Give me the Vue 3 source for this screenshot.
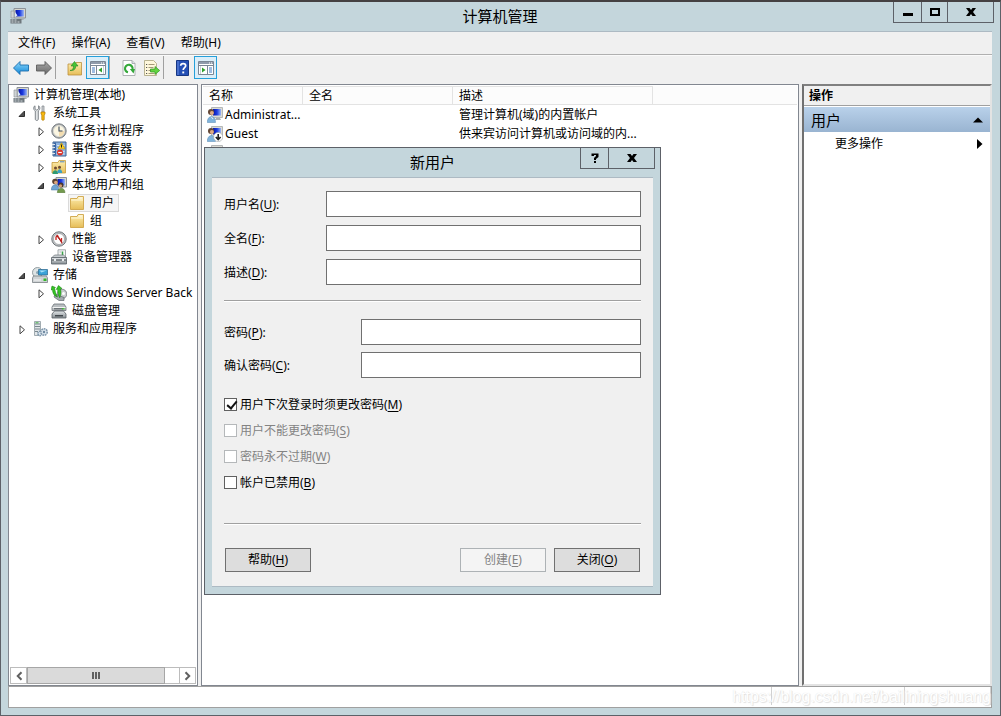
<script setup>
import { ref } from 'vue'

const menus = [
  { text: '文件', key: 'F' },
  { text: '操作', key: 'A' },
  { text: '查看', key: 'V' },
  { text: '帮助', key: 'H' },
]

const tools = [
  [
    { icon: 'back', label: '后退' },
    { icon: 'forward', label: '前进' },
  ],
  [
    { icon: 'up', label: '向上' },
    { icon: 'pane-left', label: '显示/隐藏控制台树', active: true },
  ],
  [
    { icon: 'refresh', label: '刷新' },
    { icon: 'export', label: '导出列表' },
  ],
  [
    { icon: 'help', label: '帮助' },
    { icon: 'pane-right', label: '显示/隐藏操作窗格', active: true },
  ],
]

const tree = [
  { text: '计算机管理(本地)', icon: 'computer', level: 0 },
  { text: '系统工具', icon: 'tools', level: 1, state: 'open' },
  { text: '任务计划程序', icon: 'clock', level: 2, state: 'closed' },
  { text: '事件查看器', icon: 'event', level: 2, state: 'closed' },
  { text: '共享文件夹', icon: 'share', level: 2, state: 'closed' },
  { text: '本地用户和组', icon: 'users', level: 2, state: 'open' },
  { text: '用户', icon: 'folder', level: 3, selected: true },
  { text: '组', icon: 'folder', level: 3 },
  { text: '性能', icon: 'perf', level: 2, state: 'closed' },
  { text: '设备管理器', icon: 'device', level: 2 },
  { text: '存储', icon: 'storage', level: 1, state: 'open' },
  { text: 'Windows Server Back', icon: 'backup', level: 2, state: 'closed' },
  { text: '磁盘管理', icon: 'disk', level: 2 },
  { text: '服务和应用程序', icon: 'services', level: 1, state: 'closed' },
]

const accounts = [
  { name: 'Administrat...', icon: 'user', desc: '管理计算机(域)的内置帐户' },
  { name: 'Guest', icon: 'user-off', desc: '供来宾访问计算机或访问域的内...' },
  { name: '', icon: 'user', desc: '' },
]

const identity = ref([
  { id: 'username', text: '用户名', key: 'U', type: 'text', value: '' },
  { id: 'fullname', text: '全名', key: 'F', type: 'text', value: '' },
  { id: 'description', text: '描述', key: 'D', type: 'text', value: '' },
])

const secrets = ref([
  { id: 'password', text: '密码', key: 'P', type: 'password', value: '' },
  { id: 'confirm', text: '确认密码', key: 'C', type: 'password', value: '' },
])

const options = ref([
  { id: 'must-change', text: '用户下次登录时须更改密码', key: 'M', on: true, disabled: false },
  { id: 'cannot-change', text: '用户不能更改密码', key: 'S', on: false, disabled: true },
  { id: 'never-expires', text: '密码永不过期', key: 'W', on: false, disabled: true },
  { id: 'account-off', text: '帐户已禁用', key: 'B', on: false, disabled: false },
])
</script>

<template>
  <div class="window">
    <svg class="defs" aria-hidden="true">
      <defs>
        <linearGradient id="g-blue" x1="0" y1="0" x2="0" y2="1">
          <stop offset="0" stop-color="#8fd8fb" /><stop offset="1" stop-color="#0d86d8" />
        </linearGradient>
        <linearGradient id="g-grey" x1="0" y1="0" x2="0" y2="1">
          <stop offset="0" stop-color="#a8a8a8" /><stop offset="1" stop-color="#686868" />
        </linearGradient>
        <linearGradient id="g-folder" x1="0" y1="0" x2="0" y2="1">
          <stop offset="0" stop-color="#fdeeb0" /><stop offset="1" stop-color="#e6bd58" />
        </linearGradient>
        <linearGradient id="g-screen" x1="0" y1="0" x2="1" y2="0">
          <stop offset="0" stop-color="#0714a8" /><stop offset="0.5" stop-color="#1c3be0" /><stop offset="1" stop-color="#9db8f5" />
        </linearGradient>
        <linearGradient id="g-metal" x1="0" y1="0" x2="0" y2="1">
          <stop offset="0" stop-color="#e4e8ea" /><stop offset="1" stop-color="#858c91" />
        </linearGradient>
      </defs>
      <symbol id="i-computer" viewBox="0 0 16 16">
        <path d="M4 0.500h11.500v9.500H4z" fill="#d6d6cc" stroke="#8d9298" />
        <path d="M5.500 2h8.500v6.500H5.500z" fill="url(#g-screen)" />
        <path d="M9 10.500h4l1 1.500H8z" fill="#aab0b4" />
        <path d="M1 3h3v7H1z" fill="#cfd3d5" stroke="#8c9296" stroke-width=".6" />
        <path d="M5 4l2.500 3.500L5 9z" fill="#dce9f5" />
        <path d="M.5 11h11v4.500H.5z" fill="#6e777c" />
        <path d="M1.500 12h5M1.500 14h9" stroke="#d3dadd" stroke-dasharray="2 1" />
      </symbol>
      <symbol id="i-tools" viewBox="0 0 16 16">
        <path d="M3 .8v3l1.800 1.400L6.600 3.800v-3c1.500.8 1.900 3.700-.3 5.200V14c0 2-3 2-3 0V6C1 4.500 1.400 1.600 3 .8z" fill="#e1e4e6" stroke="#757c81" stroke-width=".9" />
        <path d="M10 1h2v6h-2z" fill="#d1d5d8" stroke="#7b8287" stroke-width=".7" />
        <path d="M9 7h4v2l-.8 1v4.500c0 1-2.400 1-2.400 0V10L9 9z" fill="#f7b910" stroke="#b27a00" stroke-width=".7" />
      </symbol>
      <symbol id="i-clock" viewBox="0 0 16 16">
        <circle cx="8" cy="8" r="7.200" fill="#a5a9ac" stroke="#7e8386" />
        <circle cx="8" cy="8" r="5.600" fill="#fbf6e2" stroke="#d9d9d3" />
        <path d="M8 8h5.500A5.500 5.500 0 0 1 8 13.500z" fill="#f3ddb0" />
        <path d="M8 3.500V8h3.500" fill="none" stroke="#3d4b5c" stroke-width="1.100" />
      </symbol>
      <symbol id="i-event" viewBox="0 0 16 16">
        <path d="M2 1h13v14H2z" fill="#8fb4de" stroke="#3f6496" />
        <path d="M3 1.500h2v13H3z" fill="#3d66a3" />
        <path d="M6 4.500h7.500M6 7.500h7.500M6 10.500h7.500M6 13h7.500" stroke="#d6e4f4" />
        <path d="M1 3.500h3M1 6.500h3M1 9.500h3M1 12.500h3" stroke="#dfe6ec" />
        <path d="M10.500 1.800l3.500 6H7z" fill="#ffd21f" stroke="#b58a00" stroke-width=".6" />
        <path d="M10.500 3.500v3" stroke="#222" />
        <circle cx="9" cy="11.500" r="3" fill="#d9332b" />
        <path d="M7.200 11.500h3.600" stroke="#fff" stroke-width="1.200" />
      </symbol>
      <symbol id="i-share" viewBox="0 0 16 16">
        <path d="M1 3.500h6l1-2h6.500v12.500H1z" fill="url(#g-folder)" stroke="#c49a3b" stroke-width=".8" />
        <path d="M9 2.800h4.500" stroke="#4f86c2" />
        <circle cx="4.500" cy="9" r="1.500" fill="#6d4a32" /><circle cx="8.500" cy="8.300" r="1.500" fill="#6d4a32" />
        <path d="M1.500 15c0-5 5.500-5 5.500 0z" fill="#2f9a72" /><path d="M6.200 14c0-5 5-5 5 0z" fill="#3aa1c4" />
      </symbol>
      <symbol id="i-users" viewBox="0 0 16 16">
        <path d="M5 .5h10.500v9.500H5z" fill="#d9d9d0" stroke="#8d9298" />
        <path d="M6.500 2H14v6.500H6.500z" fill="url(#g-screen)" />
        <circle cx="4" cy="4.500" r="2.800" fill="#5b4231" /><circle cx="4.800" cy="5.500" r="1.800" fill="#dca67e" />
        <path d="M.3 13c0-7 7.400-7 7.400 0z" fill="#6fa4d3" stroke="#47779f" stroke-width=".5" />
        <circle cx="10" cy="8" r="2.500" fill="#49372b" /><circle cx="9.500" cy="8.800" r="1.600" fill="#d29c74" />
        <path d="M6.300 15.700c0-6 7.700-6 7.700 0z" fill="#739a4d" stroke="#4e7132" stroke-width=".5" />
      </symbol>
      <symbol id="i-folder" viewBox="0 0 16 16">
        <path d="M1.500 3.500h6.500l1-2h5.500v13h-13z" fill="url(#g-folder)" stroke="#cfa548" stroke-width=".9" />
        <path d="M9.500 3h4" stroke="#fff" /><path d="M2.200 5h11.800" stroke="#fff8d8" />
      </symbol>
      <symbol id="i-perf" viewBox="0 0 16 16">
        <circle cx="8" cy="8" r="7.200" fill="#c2c5c7" stroke="#6e7478" />
        <circle cx="8" cy="8" r="5.500" fill="#fff" stroke="#92979a" stroke-width=".7" />
        <path d="M5 9V6l1.500-1.500 4 6.500V7" fill="none" stroke="#cb2420" stroke-width="1.300" />
        <path d="M5.500 4.500l5.500 7" stroke="#a01a18" />
      </symbol>
      <symbol id="i-device" viewBox="0 0 16 16">
        <path d="M7 .8h7.500V8H7z" fill="#f4f5f5" stroke="#8e9498" stroke-width=".8" />
        <path d="M11.500 2.500v3.500" stroke="#38a546" stroke-width="1.500" /><path d="M8.500 3h2" stroke="#b3b9bc" />
        <path d="M1 8.500L3.500 6h9l3 2.500z" fill="#c7cdd0" stroke="#70777b" stroke-width=".7" />
        <path d="M.5 8.500h15V15H.5z" fill="url(#g-metal)" stroke="#596167" stroke-width=".8" />
        <path d="M.8 11h14.400" stroke="#434b51" /><path d="M3 10h2v2H3zM11 10h2v2h-2z" fill="#e9edef" />
      </symbol>
      <symbol id="i-storage" viewBox="0 0 16 16">
        <circle cx="5.500" cy="5.500" r="5" fill="#dde3e4" stroke="#7c888d" stroke-width=".8" /><circle cx="5.500" cy="5.500" r="1.500" fill="#8aa7b5" />
        <path d="M6.500 2.500h9V8h-9z" fill="#3ba3d8" stroke="#27648c" stroke-width=".7" /><path d="M7.500 3.500h7l-5 2z" fill="#a7e0f7" />
        <path d="M1.500 9h13l1 2v4.500H.5V11z" fill="#cfd3d5" stroke="#6a7277" stroke-width=".7" />
        <path d="M11.500 11.500h3v2.500h-3z" fill="#34b62a" /><path d="M2 13h7" stroke="#f5f6f6" />
      </symbol>
      <symbol id="i-backup" viewBox="0 0 16 16">
        <circle cx="11" cy="9" r="4.800" fill="#c9ccce" stroke="#737a7e" stroke-width=".8" /><circle cx="12.500" cy="8.500" r="1.500" fill="#fff" />
        <path d="M4 9l9 3.500v3H8L3 12z" fill="#a3aaae" stroke="#61696e" stroke-width=".7" />
        <path d="M1.500 4.500L0 5l1-4 3.500 1.500-1 .5c1 3.500 1 6 3 9C3 11 1.500 8 1.500 4.500z" fill="#35c624" stroke="#12780d" stroke-width=".5" />
        <path d="M6.500 4L5.200 4.500 7.500.5 11 3.500l-1.500.3c.8 3 .5 6-.8 9-1.700-3-1.700-6-2.200-8.800z" fill="#35c624" stroke="#12780d" stroke-width=".5" />
      </symbol>
      <symbol id="i-disk" viewBox="0 0 16 16">
        <path d="M3 1h10l2 3v3.500H1V4z" fill="#b9bec1" stroke="#6d7478" stroke-width=".8" />
        <path d="M1.500 4.500h13" stroke="#f2f3f3" /><path d="M3 5.800h9" stroke="#4c5358" />
        <path d="M3.500 8h9l2.500 3v4H1v-4z" fill="url(#g-metal)" stroke="#565d62" stroke-width=".8" />
        <path d="M4 12h8v1.500H4z" fill="#42494d" /><path d="M11 5.200h2.500v1.200H11z" fill="#38c22d" />
      </symbol>
      <symbol id="i-services" viewBox="0 0 16 16">
        <path d="M2.500.5h6v14h-6z" fill="#e1e6e9" stroke="#8e999f" stroke-width=".8" />
        <path d="M3 3h5M3 5.500h5M3 8h5M3 10.500h3" stroke="#7a888f" /><path d="M3.500 1.800h3" stroke="#43b348" />
        <circle cx="8" cy="12.500" r="2.200" fill="#dce6ee" stroke="#7d96ab" stroke-width="1.500" stroke-dasharray="1.500 .6" />
        <circle cx="12" cy="11" r="3.200" fill="#dce6ee" stroke="#8098ad" stroke-width="1.600" stroke-dasharray="1.700 .7" />
        <circle cx="12" cy="11" r="1.200" fill="#6f8aa1" />
      </symbol>
      <symbol id="i-user" viewBox="0 0 16 16">
        <path d="M4.500 .5h11v10h-11z" fill="#dcdcd4" stroke="#b4b7b8" />
        <path d="M6 2h8v6.500H6z" fill="url(#g-screen)" /><path d="M9 11h4l1 2H8z" fill="#a9afb2" />
        <circle cx="4" cy="5" r="3" fill="#644838" /><circle cx="4.900" cy="6" r="2" fill="#e0ad86" />
        <path d="M.3 15.500c0-8 8.200-8 8.200 0z" fill="#80b4dc" stroke="#5486b2" stroke-width=".5" />
        <path d="M4 9.500l2 2.500" stroke="#e8f1f8" />
      </symbol>
      <symbol id="i-user-off" viewBox="0 0 16 16">
        <path d="M4.500 .5h11v10h-11z" fill="#dcdcd4" stroke="#b4b7b8" />
        <path d="M6 2h8v6.500H6z" fill="url(#g-screen)" />
        <circle cx="4" cy="5" r="3" fill="#644838" /><circle cx="4.900" cy="6" r="2" fill="#e0ad86" />
        <path d="M.3 15.500c0-8 8.200-8 8.200 0z" fill="#80b4dc" stroke="#5486b2" stroke-width=".5" />
        <circle cx="11.200" cy="11" r="4.600" fill="#fff" stroke="#9da2a5" stroke-width=".6" />
        <path d="M11.200 8v5M8.800 11l2.400 2.600 2.400-2.600" fill="none" stroke="#222" stroke-width="1.600" />
      </symbol>
      <symbol id="i-back" viewBox="0 0 16 16">
        <path d="M.5 8L7 1.500V5h8.500v6H7v3.500z" fill="url(#g-blue)" stroke="#1b6eae" stroke-width=".9" />
      </symbol>
      <symbol id="i-forward" viewBox="0 0 16 16">
        <path d="M15.500 8L9 1.500V5H.5v6H9v3.500z" fill="url(#g-grey)" stroke="#5c5c5c" stroke-width=".9" />
      </symbol>
      <symbol id="i-up" viewBox="0 0 16 16">
        <path d="M1 4h7l1-1.500h5.500V15H1z" fill="url(#g-folder)" stroke="#bd913d" stroke-width=".8" />
        <path d="M3 10.500c3-.5 3.500-2 3.500-4.500H4L7.500 1.500 11 6H8.700C8.700 9 7 11 3 10.500z" fill="#46c436" stroke="#25821f" stroke-width=".6" />
      </symbol>
      <symbol id="i-pane-left" viewBox="0 0 16 16">
        <path d="M.5 1.500h15v13H.5z" fill="#fff" stroke="#7b8795" /><path d="M1 2h14v2H1z" fill="#8f9bab" />
        <path d="M11 3h1M13 3h1" stroke="#fff" /><path d="M.5 5.500h15M6.500 6v8.500" stroke="#7b8795" />
        <path d="M2 8h3M2 10h3M2 12h3" stroke="#3f79c1" /><path d="M12 7.500v5L8.500 10z" fill="#2fa12b" />
        <path d="M13.500 6v8" stroke="#ccd1d8" />
      </symbol>
      <symbol id="i-pane-right" viewBox="0 0 16 16">
        <path d="M.5 1.500h15v13H.5z" fill="#fff" stroke="#7b8795" /><path d="M1 2h14v2H1z" fill="#8f9bab" />
        <path d="M11 3h1M13 3h1" stroke="#fff" /><path d="M.5 5.500h15M9.500 6v8.500" stroke="#7b8795" />
        <path d="M11 8h3M11 10h3M11 12h3" stroke="#3f79c1" /><path d="M4 7.500v5L7.500 10z" fill="#2fa12b" />
        <path d="M2.500 6v8" stroke="#ccd1d8" />
      </symbol>
      <symbol id="i-refresh" viewBox="0 0 16 16">
        <path d="M2 .5h9l3 3v12H2z" fill="#fff" stroke="#9da1a5" stroke-width=".8" /><path d="M11 .5v3h3" fill="#dce0e3" stroke="#9da1a5" stroke-width=".8" />
        <path d="M7 12.300A3.800 3.800 0 1 1 11.500 9.500" fill="none" stroke="#35a83a" stroke-width="2.100" /><path d="M8.800 9h5.200l-1.500 4.500z" fill="#35a83a" />
      </symbol>
      <symbol id="i-export" viewBox="0 0 16 16">
        <path d="M.5.5h9l3 3v12H.5z" fill="#fff8dc" stroke="#aaa37c" stroke-width=".8" />
        <path d="M2 4.500h1.200M2 7.500h1.200M2 10.500h1.200M2 13.500h1.200" stroke="#555" /><path d="M4.500 4.500h6M4.500 7.500h5M4.500 10.500h3M4.500 13.500h6" stroke="#a49a78" />
        <path d="M6.500 9H11V6.500l4.700 4-4.700 4V12H6.500z" fill="#63d440" stroke="#2e9724" stroke-width=".7" />
      </symbol>
      <symbol id="i-help" viewBox="0 0 16 16">
        <path d="M1.500 .5h12v15h-12z" fill="#244fb5" stroke="#173784" /><path d="M3 1v14" stroke="#6a8de0" />
        <path d="M5.700 5.800c0-3 5-3 5 0 0 1.800-2.500 2-2.500 4.200" fill="none" stroke="#fff" stroke-width="1.700" /><path d="M7.300 11.500h1.900v1.900H7.300z" fill="#fff" />
      </symbol>
    </svg>

    <header class="titlebar">
      <svg class="icon"><use href="#i-computer" /></svg>
      <h1>计算机管理</h1>
      <div class="caption">
        <button type="button" aria-label="最小化"><svg viewBox="0 0 12 12"><path d="M1 7h10v3H1z" /></svg></button>
        <button type="button" class="maximize" aria-label="最大化"><svg viewBox="0 0 12 12"><path d="M2 3h8v6H2z" fill="none" stroke="#000" stroke-width="2" /></svg></button>
        <button type="button" class="close" aria-label="关闭"><svg viewBox="0 0 12 12"><path d="M1 2h3.500L6 4l1.500-2H11L8 6l3 4H7.500L6 8l-1.500 2H1l3-4z" /></svg></button>
      </div>
    </header>

    <main class="client">
      <nav class="menubar">
        <button v-for="m in menus" :key="m.key" type="button">{{ m.text }}({{ m.key }})</button>
      </nav>
      <div class="toolbar">
        <div v-for="(group, i) in tools" :key="i" class="group">
          <button v-for="t in group" :key="t.icon" type="button" :class="{ active: t.active }" :aria-label="t.label">
            <svg class="icon"><use :href="'#i-' + t.icon" /></svg>
          </button>
        </div>
      </div>

      <div class="panes">
        <section class="pane tree-pane">
          <ul class="tree">
            <li v-for="n in tree" :key="n.text" :class="'level' + n.level">
              <button v-if="n.state" type="button" class="twisty" :aria-label="n.text">
                <svg v-if="n.state === 'open'" viewBox="0 0 8 9"><path d="M6.500 2v5.500H1z" fill="#505050" stroke="#303030" /></svg>
                <svg v-else viewBox="0 0 8 9"><path d="M2 .8v8L6.500 4.800z" fill="#fff" stroke="#444" /></svg>
              </button>
              <span v-else-if="n.level" class="twisty"></span>
              <span class="node" :class="{ selected: n.selected }">
                <svg class="icon"><use :href="'#i-' + n.icon" /></svg><span>{{ n.text }}</span>
              </span>
            </li>
          </ul>
          <div class="scrollbar">
            <button type="button" aria-label="向左滚动"><svg viewBox="0 0 8 8"><path d="M6 1L3 4l3 3" /></svg></button>
            <div class="track"><div class="thumb"><i></i><i></i><i></i></div></div>
            <button type="button" aria-label="向右滚动"><svg viewBox="0 0 8 8"><path d="M2 1l3 3-3 3" /></svg></button>
          </div>
        </section>

        <section class="pane list-pane">
          <table>
            <colgroup><col class="c-name"><col class="c-full"><col class="c-desc"><col></colgroup>
            <thead><tr><th>名称</th><th>全名</th><th>描述</th><th></th></tr></thead>
            <tbody>
              <tr v-for="(a, i) in accounts" :key="i">
                <td><span class="account"><svg class="icon"><use :href="'#i-' + a.icon" /></svg>{{ a.name }}</span></td>
                <td></td>
                <td>{{ a.desc }}</td>
                <td></td>
              </tr>
            </tbody>
          </table>
        </section>

        <aside class="actions">
          <h2>操作</h2>
          <button type="button" class="group-head">用户<svg viewBox="0 0 10 6"><path d="M0 5.500L5 .5l5 5z" /></svg></button>
          <button type="button" class="action">更多操作<svg viewBox="0 0 6 10"><path d="M0 0l5.500 5L0 10z" /></svg></button>
        </aside>
      </div>

      <footer class="status">
        <span></span><span></span><span></span>
        <p class="watermark">https://blog.csdn.net/bailiningshuang</p>
      </footer>
    </main>

    <form class="dialog" role="dialog" aria-labelledby="dialog-title" @submit.prevent>
      <header class="dialog-title">
        <h2 id="dialog-title">新用户</h2>
        <div class="caption">
          <button type="button" aria-label="帮助"><svg viewBox="0 0 12 12"><path d="M2.500 4V1.500h7V5L7 7v1H5V6l2-2V3H5v1zM5 9h2v2H5z" /></svg></button>
          <button type="button" class="close" aria-label="关闭"><svg viewBox="0 0 12 12"><path d="M1 2h3.500L6 4l1.500-2H11L8 6l3 4H7.500L6 8l-1.500 2H1l3-4z" /></svg></button>
        </div>
      </header>
      <div class="dialog-body">
        <div class="fields">
          <div v-for="f in identity" :key="f.id" class="field">
            <label :for="f.id">{{ f.text }}(<u>{{ f.key }}</u>):</label>
            <input :id="f.id" v-model="f.value" :type="f.type">
          </div>
        </div>
        <hr>
        <div class="fields narrow">
          <div v-for="f in secrets" :key="f.id" class="field">
            <label :for="f.id">{{ f.text }}(<u>{{ f.key }}</u>):</label>
            <input :id="f.id" v-model="f.value" :type="f.type">
          </div>
        </div>
        <div class="options">
          <div v-for="o in options" :key="o.id" class="option">
            <input :id="o.id" v-model="o.on" type="checkbox" :disabled="o.disabled">
            <label :for="o.id">{{ o.text }}(<u>{{ o.key }}</u>)</label>
          </div>
        </div>
        <hr>
        <div class="buttons">
          <button type="button" class="first">帮助(<u>H</u>)</button>
          <button type="submit" disabled>创建(<u>E</u>)</button>
          <button type="button">关闭(<u>O</u>)</button>
        </div>
      </div>
    </form>
  </div>
</template>

<style>
body { margin: 0; }
</style>

<style scoped>
* { box-sizing: border-box; }
.window {
  position: relative;
  display: flex;
  flex-direction: column;
  height: 100vh;
  padding: 0 8px 7px 7px;
  border: 1px solid #5d6168;
  border-top: 2px solid #454142;
  background: #c4d6dc;
  color: #000;
  font: 12px/18px "Noto Sans", "Noto Sans CJK SC", sans-serif;
  overflow: hidden;
}
.defs { position: absolute; width: 0; height: 0; }
.icon { flex: none; width: 16px; height: 16px; }
button { padding: 0; border: 0; background: none; color: inherit; font: inherit; }
h1, h2, p, ul { margin: 0; padding: 0; font-weight: normal; list-style: none; }

.titlebar { display: grid; grid-template-columns: 1fr auto 1fr; flex: none; height: 29px; }
.titlebar .icon { margin: 6px 0 0 2px; }
h1, .dialog-title h2 { font-size: 15px; line-height: 28px; }
.caption {
  display: flex;
  justify-self: end;
  height: 21px;
  margin-right: -2px;
  border: 1px solid #5d6168;
  border-top: 0;
}
.caption button { display: flex; align-items: center; justify-content: center; width: 28px; border-right: 1px solid #5d6168; }
.caption .maximize { width: 26px; }
.caption .close { width: 45px; border-right: 0; }
.caption svg { width: 12px; height: 12px; }

.client { display: flex; flex: 1; flex-direction: column; min-height: 0; border-top: 1px solid #adbac3; background: #f0f0f0; }
.menubar { display: flex; gap: 16px; height: 23px; padding: 0 10px; border-bottom: 1px solid #b0b0b0; }
.toolbar { display: flex; height: 29px; padding: 0 1px; border-top: 1px solid #fafafa; }
.group { display: flex; height: 23px; }
.group + .group { padding-left: 7px; border-left: 1px solid #a0a0a0; }
.group button { display: flex; align-items: center; justify-content: center; width: 23px; height: 23px; }
.group .active { border: 1px solid #26a0da; background: #dbeef9; }

.panes { display: flex; flex: 1; gap: 3px; min-height: 0; }
.pane { border: 1px solid #828790; background: #fff; overflow: hidden; }
.tree-pane { display: flex; flex: none; flex-direction: column; justify-content: space-between; width: 190px; padding: 1px; }
.tree { overflow: hidden; }
.tree li { display: flex; align-items: center; height: 18px; }
.level0 { padding-left: 3px; }
.level1 { padding-left: 7px; }
.level2 { padding-left: 26px; }
.level3 { padding-left: 44px; }
.twisty { display: flex; flex: none; align-items: center; justify-content: center; width: 10px; height: 18px; margin-right: 5px; }
.twisty svg { width: 8px; height: 9px; }
.node { display: flex; align-items: center; gap: 5px; height: 18px; white-space: nowrap; }
.level3 .twisty { width: 9px; }
.level3 .node { padding: 0 4px 0 0; border: 1px solid transparent; }
.level3 .selected { border-color: #dadada; background: #f5f5f5; }
.scrollbar { display: flex; height: 17px; }
.scrollbar button { display: flex; align-items: center; justify-content: center; width: 17px; border: 1px solid #bcbcbc; }
.scrollbar svg { width: 10px; height: 10px; fill: none; stroke: #606060; stroke-width: 1.600; }
.track { display: flex; flex: 1; border: solid #bcbcbc; border-width: 1px 0; }
.thumb { display: flex; align-items: center; justify-content: center; gap: 1px; width: 91%; margin: -1px 0; border: 1px solid #a6a6a6; background: #dadada; }
.thumb i { width: 2px; height: 7px; background: #606060; }

.list-pane { flex: 1; min-width: 0; padding: 1px; }
table { width: 100%; border-collapse: separate; border-spacing: 0; table-layout: fixed; }
.c-name { width: 100px; }
.c-full { width: 150px; }
.c-desc { width: 200px; }
th { height: 19px; padding: 0 6px; border: solid #e3e3e3; border-width: 1px 1px 1px 0; background: #fcfcfc; font-weight: normal; line-height: 17px; text-align: left; }
th:last-child { border-top-color: #fcfcfc; border-right: 0; }
td { height: 19px; padding: 0 0 0 6px; line-height: 19px; white-space: nowrap; }
td:first-child { padding-left: 4px; }
.account { display: flex; align-items: center; gap: 2px; }

.actions { width: 190px; border: 2px solid; border-color: #808080 #e3e3e3 #e3e3e3 #707070; background: #fff; }
.actions h2 { height: 20px; padding-left: 5px; border-bottom: 1px solid #a0a0a0; background: #f0f0f0; font-size: 12px; font-weight: bold; line-height: 20px; }
.group-head, .action { display: flex; align-items: center; justify-content: space-between; width: 100%; padding: 0 7px; }
.group-head { height: 25px; margin-top: 1px; background: linear-gradient(#b9d1ea, #99b4d1); font-size: 15px; }
.group-head svg { width: 10px; height: 6px; }
.action { height: 24px; padding: 0 7px 0 31px; }
.action svg { width: 6px; height: 10px; }

.status { position: relative; display: flex; flex: none; height: 22px; border: 1px solid #a0a0a0; background: #fff; }
.status span { height: 18px; border-right: 1px solid #d0d0d0; }
.status span:first-child { flex: 1; }
.status span:nth-child(2) { width: 133px; }
.status span:nth-child(3) { width: 86px; }
.watermark { position: absolute; right: 0; bottom: 0; color: #fff; font: 16px/20px "Liberation Sans", sans-serif; text-shadow: 0 0 1px #ddd, 1px 1px 1px #e2e2e2; }

.dialog { position: absolute; top: 145px; left: 203px; width: 457px; padding: 0 7px 7px; border: 1px solid #5d6168; background: #c4d6dc; }
.dialog-title { display: grid; grid-template-columns: 1fr auto 1fr; height: 29px; }
.dialog-title h2 { grid-column: 2; }
.dialog-body { padding: 13px 12px 14px; border: solid #adbac3; border-width: 1px 0; background: #f0f0f0; }
.fields { display: grid; gap: 8px; }
.field { display: grid; grid-template-columns: 102px 1fr; align-items: center; }
.narrow { gap: 7px; }
.narrow .field { grid-template-columns: 137px 1fr; }
.field label { padding-top: 1px; }
.field input { width: 100%; height: 26px; padding: 2px 4px; border: 1px solid #707070; background: #fff; font: inherit; }
hr { height: 2px; margin: 15px 0 17px; border: solid; border-width: 1px 0; border-color: #a0a0a0 #fff #fff; }
u { text-underline-offset: 2px; }
.options { display: grid; margin: 13px 0 28px; }
.option { display: flex; align-items: center; gap: 3px; height: 26px; }
.option input {
  position: relative;
  appearance: none;
  width: 13px;
  height: 13px;
  margin: 0;
  border: 1px solid #606060;
  background: #fff;
}
.option label { padding-top: 1px; }
.option input:checked::after {
  content: "";
  position: absolute;
  left: 4px;
  top: 0;
  width: 4px;
  height: 8px;
  border: solid #111;
  border-width: 0 2px 2px 0;
  transform: rotate(40deg);
}
.option input:disabled { border-color: #b5b8ba; }
.option input:disabled + label { color: #838383; }
.buttons { display: flex; gap: 8px; padding: 6px 1px 0; }
.buttons button { width: 86px; height: 24px; border: 1px solid #707070; background: #ddd; line-height: 22px; }
.buttons .first { margin-right: auto; }
.buttons button:disabled { border-color: #adb2b5; background: #f4f4f4; color: #838383; }
</style>
